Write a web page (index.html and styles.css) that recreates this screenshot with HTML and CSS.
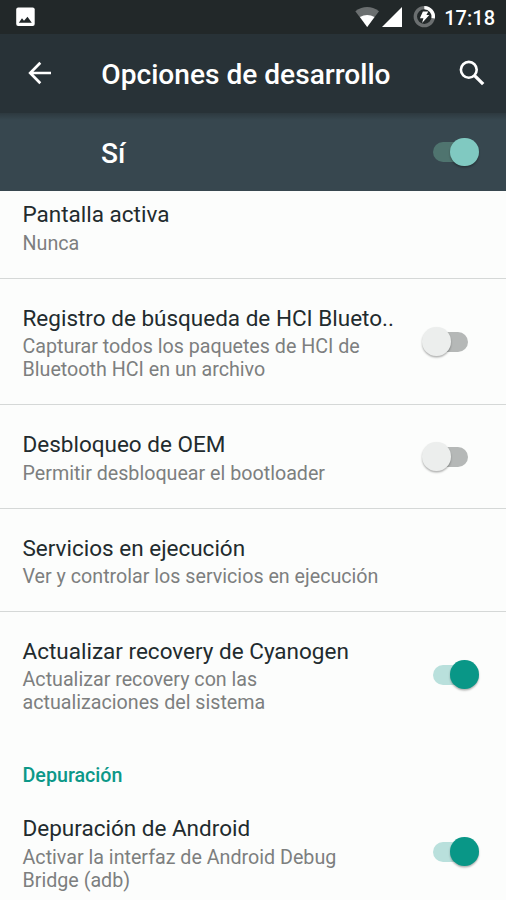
FILE: index.html
```html
<!DOCTYPE html>
<html lang="es">
<head>
<meta charset="utf-8">
<title>Opciones de desarrollo</title>
<link rel="stylesheet" href="styles.css">
</head>
<body>
<div class="screen">
  <div class="status">
    <svg class="photo" width="20" height="20" viewBox="0 0 20 20"><rect x="0.2" y="0.5" width="18.5" height="18.5" rx="2" fill="#fff"/><path d="M2.8 15.7L6 11.3L8 13.8L11.5 9.8L15.8 15.7Z" fill="#222829"/></svg>
    <svg class="signals" width="82" height="24" viewBox="0 0 82 24">
      <path d="M0.3 7.2Q12.2 -1.2 24 7.2L12.2 23Z" fill="#6b6f70"/>
      <path d="M4.9 13Q12.2 8.8 19.5 13L12.2 23Z" fill="#fff"/>
      <path d="M47 3V23H27Z" fill="#fff"/>
      <circle cx="69.3" cy="12.6" r="9" fill="none" stroke="#6b6f70" stroke-width="3.4"/>
      <path d="M69.3 3.6A9 9 0 0 1 78.2 14.2" fill="none" stroke="#fff" stroke-width="3.4"/>
      <path d="M67.9 7.4H73.3L71.4 11H74.3L67.1 19L68.4 14.3H64.9Z" fill="#fff"/>
    </svg>
    <span class="clock">17:18</span>
  </div>
  <header class="toolbar">
    <svg class="back" width="24" height="24" viewBox="0 0 24 24"><path d="M23 12H2.5M12.3 1.8L2.2 12L12.3 22.2" fill="none" stroke="#fff" stroke-width="2.7"/></svg>
    <h1>Opciones de desarrollo</h1>
    <svg class="search" width="26" height="26" viewBox="0 0 26 26"><circle cx="9.8" cy="9.8" r="7.9" fill="none" stroke="#fff" stroke-width="2.6"/><path d="M15.6 15.6L24.2 24.2" stroke="#fff" stroke-width="3.3"/></svg>
  </header>
  <div class="master"><span>Sí</span><i class="switch on light"></i></div>
  <main>
    <section class="row first"><div><h2>Pantalla activa</h2><p>Nunca</p></div></section>
    <section class="row"><div><h2>Registro de búsqueda de HCI Blueto..</h2><p>Capturar todos los paquetes de HCI de<br>Bluetooth HCI en un archivo</p></div><i class="switch"></i></section>
    <section class="row"><div><h2>Desbloqueo de OEM</h2><p>Permitir desbloquear el bootloader</p></div><i class="switch"></i></section>
    <section class="row"><div><h2>Servicios en ejecución</h2><p>Ver y controlar los servicios en ejecución</p></div></section>
    <section class="row"><div><h2>Actualizar recovery de Cyanogen</h2><p>Actualizar recovery con las<br>actualizaciones del sistema</p></div><i class="switch on"></i></section>
    <h3>Depuración</h3>
    <section class="row last"><div><h2>Depuración de Android</h2><p>Activar la interfaz de Android Debug<br>Bridge (adb)</p></div><i class="switch on"></i></section>
  </main>
</div>
</body>
</html>
```
FILE: styles.css
```css
* { box-sizing: border-box; margin: 0; padding: 0; }
body { font-family: Roboto, "Liberation Sans", sans-serif; background: #fcfdfc; }
.screen { height: 900px; overflow: hidden; display: flex; flex-direction: column; }
svg { display: block; flex: none; }
.status { flex: none; height: 34px; background: #222829; display: flex; align-items: flex-start; padding: 0 11px 0 16px; }
.photo { margin-top: 7px; }
.signals { margin: 4px 0 0 auto; }
.clock { margin-left: 7.5px; margin-top: 5px; color: #fff; font-size: 20px; line-height: 26px; font-weight: 500; }
.toolbar { flex: none; height: 79px; background: #283237; display: flex; align-items: center; padding: 0 21px 0 28px; }
.back { margin-bottom: 1px; }
.toolbar h1 { color: #fff; font-size: 28.12px; font-weight: 500; line-height: 34px; margin: 3px auto 0 49.3px; white-space: nowrap; }
.search { margin-bottom: 1px; }
.master { flex: none; height: 78px; background: linear-gradient(#2d393f, #37474f 7px); display: flex; align-items: center; justify-content: space-between; padding: 0 27px 0 101px; color: #fff; font-size: 28.12px; font-weight: 500; }
.master span { padding-top: 3px; }
main { flex: 1; min-height: 0; }
.row { display: flex; justify-content: space-between; align-items: center; border-bottom: 1px solid #d5d8d7; padding: 25px 27px 22.8px 22.5px; white-space: nowrap; }
.row.first { padding-top: 9.4px; padding-bottom: 23.1px; }
.row.last, .row:nth-child(5) { border-bottom: 0; }
.row.last { padding-top: 25.9px; }
h2 { font-size: 22.5px; font-weight: 400; line-height: 28px; color: #222b2e; }
p { font-size: 19.68px; line-height: 23.1px; color: #7d7f7f; margin-top: 3.4px; }
h3 { font-size: 19.68px; line-height: 24px; font-weight: 500; color: #0c9888; padding: 27px 22.5px 0; }
.switch { position: relative; flex: none; width: 57px; height: 29px; }
.row .switch { margin-bottom: 2px; }
.switch::before { content: ""; position: absolute; left: 11px; top: 4.5px; width: 35px; height: 20px; border-radius: 10px; background: #b5b8b7; }
.switch:not(.on)::before { left: 5px; width: 41px; }
.switch::after { content: ""; position: absolute; left: 0; top: 0; width: 28.5px; height: 28.5px; border-radius: 50%; background: #eceeed; box-shadow: 0 1.5px 2px rgba(0,0,0,.3); }
.switch.on::before { background: #b9e0dc; }
.switch.on::after { left: 28px; background: #099787; }
.switch.light::before { background: #4f746f; }
.switch.light::after { background: #80c9c1; }
```
